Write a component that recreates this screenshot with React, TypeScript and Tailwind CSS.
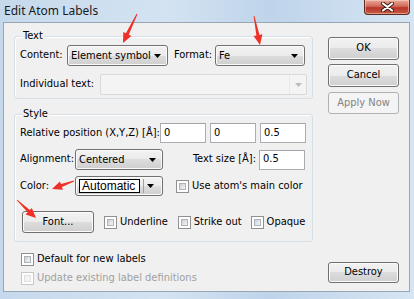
import React from 'react';

function arrowPoints(x1: number, y1: number, x2: number, y2: number) {
    // tapered red annotation arrow: thin tail, wide head at (x2,y2)
    const dx = x2 - x1;
    const dy = y2 - y1;
    const len = Math.hypot(dx, dy);
    const ux = dx / len;
    const uy = dy / len;
    const px = -uy;
    const py = ux;
    const head = 10;
    const bx = x2 - ux * head;
    const by = y2 - uy * head;
    const pts = [
        [x1 + px * 0.4, y1 + py * 0.4],
        [bx + px * 1.6, by + py * 1.6],
        [bx + px * 4.5, by + py * 4.5],
        [x2, y2],
        [bx - px * 4.5, by - py * 4.5],
        [bx - px * 1.6, by - py * 1.6],
        [x1 - px * 0.4, y1 - py * 0.4],
    ];
    return pts.map((p) => `${p[0].toFixed(1)},${p[1].toFixed(1)}`).join(' ');
}

const btn =
    'flex items-center justify-center border border-[#707070] rounded-[3px] bg-[linear-gradient(#f2f2f2_0%,#ebebeb_50%,#dddddd_50%,#cfcfcf_100%)] shadow-[inset_0_0_0_1px_#fbfbfb]';

function DownTri({ color = '#000' }: { color?: string }) {
    return (
        <svg width="7" height="4" viewBox="0 0 7 4">
            <path d="M0 0h7L3.5 4z" fill={color} />
        </svg>
    );
}

function Combo({ value, className }: { value: string; className: string }) {
    return (
        <div className={`${btn} justify-start h-[21px] pl-[3px] pr-[6px] ${className}`}>
            <span className="flex-1 leading-none whitespace-nowrap">{value}</span>
            <DownTri />
        </div>
    );
}

function Field({ value, className }: { value: string; className: string }) {
    return (
        <div className={`h-[20px] flex items-center bg-white border border-[#abadb3] border-t-[#a0a4ab] pl-[3px] ${className}`}>
            {value}
        </div>
    );
}

function Check({ label, disabled }: { label: string; disabled?: boolean }) {
    return (
        <div className="flex items-center h-[13px] whitespace-nowrap">
            <span
                className={`w-[13px] h-[13px] p-[2px] border bg-white flex shrink-0 ${
                    disabled ? 'border-[#c8c8c8]' : 'border-[#8f8f8f]'
                }`}
            >
                <span
                    className={`flex-1 border ${
                        disabled
                            ? 'border-[#e0e0e0] bg-[#f4f4f4]'
                            : 'border-[#aeb3b9] bg-gradient-to-br from-[#cbcfd5] to-[#f6f6f6]'
                    }`}
                />
            </span>
            <span className={`ml-[3px] ${disabled ? 'text-[#a0a0a0]' : ''}`}>{label}</span>
        </div>
    );
}

export default function App() {
    return (
        <div className="relative w-[414px] h-[299px] overflow-hidden bg-[linear-gradient(90deg,#c6d9ec,#d3e3f2_40%,#bfd4ea_65%,#d6e5f3)] text-[11px] text-black font-['DejaVu_Sans_Condensed','Liberation_Sans',sans-serif]">
            {/* Title bar */}
            <div className="h-[22px] flex items-start">
                <div className="pl-[4px] pt-[2px] text-[12px] text-[#1a1a1a] font-['Noto_Sans',sans-serif] leading-[18px]">
                    Edit Atom Labels
                </div>
                <div className="ml-auto mr-[4px] w-[46px] h-[15px] rounded-b-[4px] border border-t-0 border-[#5a2a22] bg-[linear-gradient(#e9a99a_0%,#d06a58_45%,#b8352a_55%,#c65a44_100%)] flex items-center justify-center shadow-[inset_0_0_0_1px_rgba(255,220,210,0.5)]">
                    <svg width="13" height="10" viewBox="0 0 13 10">
                        <path d="M2 1.5L11 8.5M11 1.5L2 8.5" stroke="#3a1a14" strokeWidth="4" strokeLinecap="round" />
                        <path d="M2 1.5L11 8.5M11 1.5L2 8.5" stroke="#fff" strokeWidth="2.2" strokeLinecap="round" />
                    </svg>
                </div>
            </div>

            {/* Client area */}
            <div className="ml-[3px] mr-[4px] h-[270px] bg-[#f0f0f0] border border-[#98a6b4] flex">
                {/* Left column */}
                <div className="ml-[10px] w-[299px] pt-[13px] flex flex-col">
                    {/* Text group */}
                    <div className="relative h-[63px] border border-[#d5dfe5] rounded-[3px] shadow-[inset_1px_1px_0_#fff] pl-[5px] pt-[8px]">
                        <span className="absolute left-[7px] top-[-8px] px-[1px] bg-[#f0f0f0] leading-[14px]">Text</span>
                        <div className="flex items-center h-[21px]">
                            <span className="w-[47px]">Content:</span>
                            <Combo value="Element symbol" className="w-[101px]" />
                            <span className="ml-[6px] w-[41px]">Format:</span>
                            <Combo value="Fe" className="w-[90px]" />
                        </div>
                        <div className="flex items-center h-[21px] mt-[8px]">
                            <span className="w-[80px] whitespace-nowrap">Individual text:</span>
                            <div className="w-[207px] h-[21px] border border-[#d9d9d9] rounded-[2px] bg-[#f4f4f4] flex">
                                <div className="flex-1" />
                                <div className="w-[17px] flex items-center justify-center border-l border-[#e8e8e8]">
                                    <DownTri color="#bdbdbd" />
                                </div>
                            </div>
                        </div>
                    </div>

                    {/* Style group */}
                    <div className="relative mt-[15px] h-[128px] border border-[#d5dfe5] rounded-[3px] shadow-[inset_1px_1px_0_#fff] pl-[5px] pt-[8px]">
                        <span className="absolute left-[7px] top-[-8px] px-[1px] bg-[#f0f0f0] leading-[14px]">Style</span>
                        <div className="flex items-center h-[20px]">
                            <span className="w-[140px] whitespace-nowrap">Relative position (X,Y,Z) [Å]:</span>
                            <Field value="0" className="w-[46px]" />
                            <Field value="0" className="w-[46px] ml-[4px]" />
                            <Field value="0.5" className="w-[46px] ml-[4px]" />
                        </div>
                        <div className="flex items-center h-[21px] mt-[6px]">
                            <span className="w-[55px]">Alignment:</span>
                            <Combo value="Centered" className="w-[88px]" />
                            <span className="flex-1 text-right pr-[3px] whitespace-nowrap">Text size [Å]:</span>
                            <Field value="0.5" className="w-[46px] mr-[7px]" />
                        </div>
                        <div className="flex items-center h-[20px] mt-[6px]">
                            <span className="w-[55px]">Color:</span>
                            <div className={`${btn} justify-start w-[88px] h-[20px] pl-[3px] pr-[6px]`}>
                                <span className="w-[61px] h-[14px] bg-white border border-black flex items-center pl-[2px] leading-none text-[12px] font-['Liberation_Sans',sans-serif]">
                                    Automatic
                                </span>
                                <span className="ml-[3px] w-px h-[14px] bg-[#a0a0a0]" />
                                <span className="flex-1 flex justify-center">
                                    <DownTri />
                                </span>
                            </div>
                            <div className="ml-[13px]">
                                <Check label="Use atom's main color" />
                            </div>
                        </div>
                        <div className="flex items-center h-[22px] mt-[15px]">
                            <div className={`${btn} ml-[2px] w-[72px] h-[22px]`}>Font...</div>
                            <div className="ml-[10px]">
                                <Check label="Underline" />
                            </div>
                            <div className="ml-[10px]">
                                <Check label="Strike out" />
                            </div>
                            <div className="ml-[9px]">
                                <Check label="Opaque" />
                            </div>
                        </div>
                    </div>

                    <div className="mt-[11px] ml-[7px]">
                        <Check label="Default for new labels" />
                    </div>
                    <div className="mt-[6px] ml-[7px]">
                        <Check label="Update existing label definitions" disabled />
                    </div>
                </div>

                {/* Right column */}
                <div className="ml-[15px] w-[71px] pt-[14px] pb-[8px] flex flex-col">
                    <div className={`${btn} h-[23px] border-[#3c7fb1] shadow-[inset_0_0_0_1px_#48d2f9,inset_0_0_3px_1px_#a6e6fb]`}>OK</div>
                    <div className={`${btn} h-[23px] mt-[4px]`}>Cancel</div>
                    <div className="h-[22px] mt-[5px] flex items-center justify-center border border-[#adb2b5] rounded-[3px] bg-[#f4f4f4] text-[#838383]">
                        Apply Now
                    </div>
                    <div className={`${btn} h-[21px] mt-auto`}>Destroy</div>
                </div>
            </div>

            {/* Red annotation arrows */}
            <svg className="absolute inset-0 pointer-events-none" width="414" height="299">
                <polygon points={arrowPoints(137, 14, 123, 43)} fill="#ee3026" />
                <polygon points={arrowPoints(254, 16, 260, 45)} fill="#ee3026" />
                <polygon points={arrowPoints(74, 181, 52, 189)} fill="#ee3026" />
                <polygon points={arrowPoints(17, 200, 36, 218)} fill="#ee3026" />
            </svg>
        </div>
    );
}
